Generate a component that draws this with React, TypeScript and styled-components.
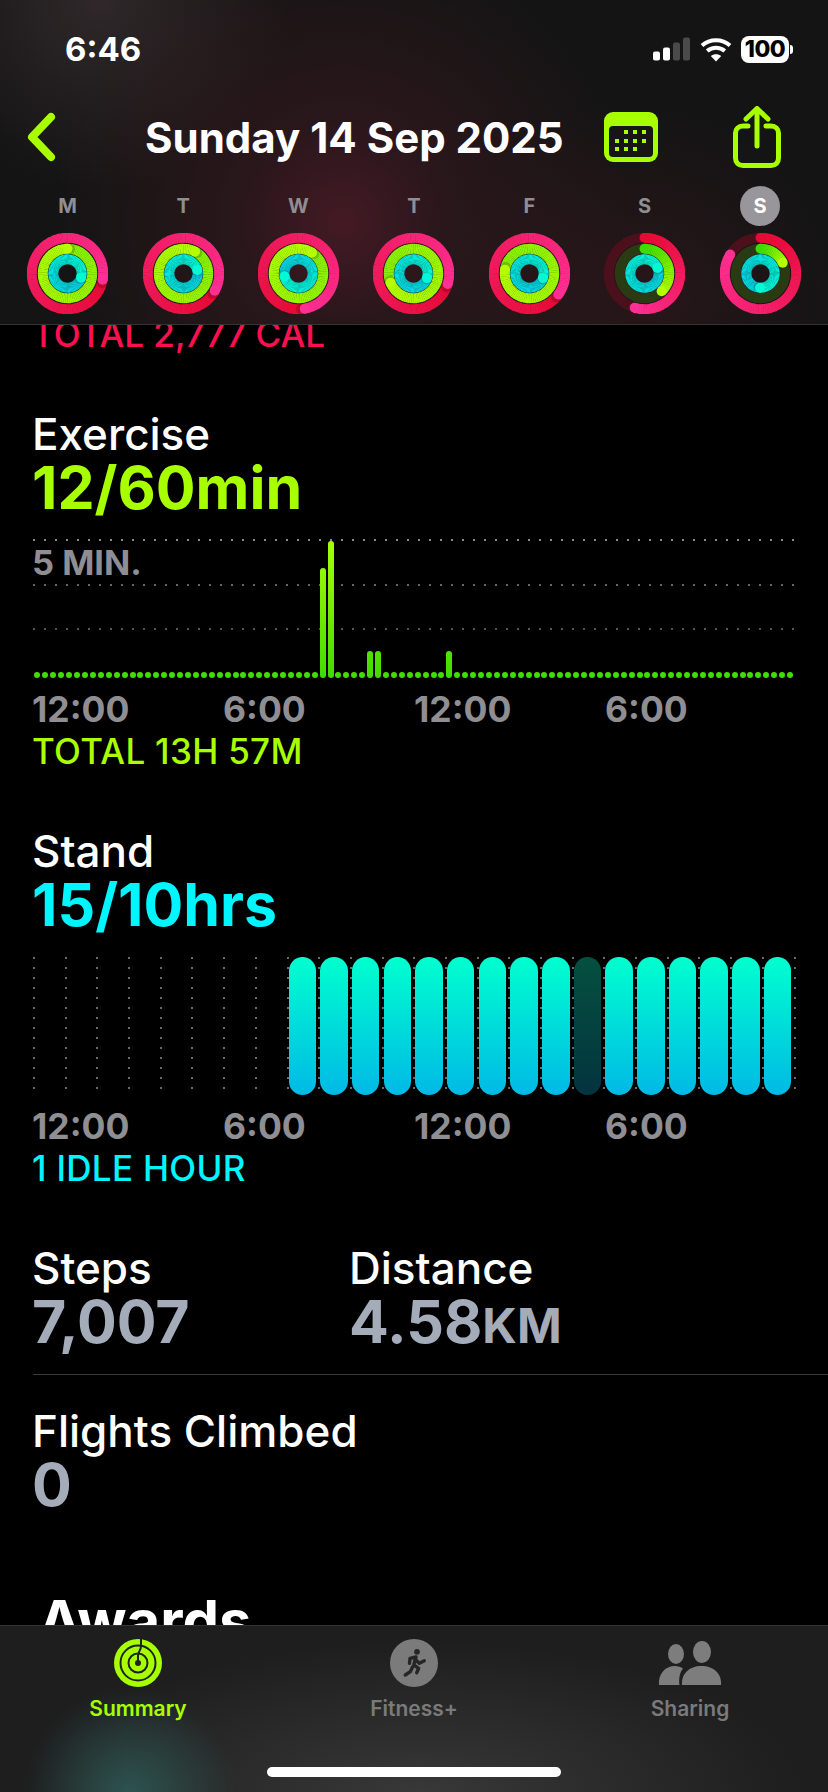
import styled, { createGlobalStyle } from 'styled-components';

const LIME = '#a8ff00';
const CYAN = '#00f6ff';
const GREY = '#8e8e93';

const GlobalStyle = createGlobalStyle`
  html, body {
    margin: 0;
    padding: 0;
    background: #000;
  }

  body {
    font-family: Inter, 'Liberation Sans', sans-serif;
    color: #fff;
  }
`;

const WEEK = [
  { day: 'M', outer: 460, middle: 360, inner: 467 },
  { day: 'T', outer: 479, middle: 388, inner: 436 },
  { day: 'W', outer: 530, middle: 393, inner: 619 },
  { day: 'T', outer: 467, middle: 608, inner: 469 },
  { day: 'F', outer: 486, middle: 639, inner: 469 },
  { day: 'S', outer: 196, middle: 136, inner: 427 },
  { day: 'S', outer: 302, middle: 64, inner: 542, today: true },
];

const RINGS = {
  outer: { r: 35.7, from: '#e80a34', fullFrom: '#e80a34', to: '#ff2f94', track: '#4c0f1c' },
  middle: { r: 24.7, from: '#3edc00', fullFrom: '#84f000', to: '#b4ff00', track: '#2a3a12' },
  inner: { r: 14.2, from: '#00d0e4', fullFrom: '#00d0e4', to: '#00fad6', track: '#083f42' },
};

const HOURS = ['12:00', '6:00', '12:00', '6:00'];
const EXERCISE_BARS: Record<number, number> = { 36: 110, 37: 137, 42: 27, 43: 27, 52: 27 };
const EXERCISE_SLOTS = Array.from({ length: 96 }, (_, i) => EXERCISE_BARS[i] ?? 6);
const STAND_HOURS = Array.from({ length: 24 }, (_, i) => (i < 8 ? 'none' : i === 17 ? 'idle' : 'stood'));

const mix = (from: string, to: string, t: number) => {
  const channel = (hex: string, i: number) => parseInt(hex.slice(1 + i * 2, 3 + i * 2), 16);
  const parts = [0, 1, 2].map((i) => Math.round(channel(from, i) + (channel(to, i) - channel(from, i)) * t));
  return `rgb(${parts.join(',')})`;
};

const polar = (r: number, deg: number) => {
  const rad = ((deg - 90) * Math.PI) / 180;
  return { x: 40.5 + r * Math.cos(rad), y: 40.5 + r * Math.sin(rad) };
};

const arc = (r: number, a: number, b: number) => {
  const start = polar(r, a);
  const end = polar(r, b);
  return `M${start.x} ${start.y}A${r} ${r} 0 0 1 ${end.x} ${end.y}`;
};

// angle is how far the ring has travelled, more than 360 means the goal was passed
const RingArc = ({ kind, angle }: { kind: keyof typeof RINGS; angle: number }) => {
  const { r, from, fullFrom, to, track } = RINGS[kind];
  const full = angle >= 360;
  const start = full ? angle - 360 : 0;
  const sweep = angle - start;
  const steps = Math.ceil(sweep / 4);
  const head = polar(r, angle);
  const shadow = polar(r, angle + 6);
  const tail = polar(r, start);

  return (
    <g fill='none' strokeWidth='10'>
      {!full && <circle cx='40.5' cy='40.5' r={r} stroke={track} />}
      {!full && <circle cx={tail.x} cy={tail.y} r='5' fill={from} stroke='none' />}
      {Array.from({ length: steps }, (_, i) => (
        <path
          key={i}
          d={arc(r, start + (sweep * i) / steps, start + (sweep * (i + 1)) / steps + 0.6)}
          stroke={mix(full ? fullFrom : from, to, i / steps)}
        />
      ))}
      {full && <circle cx={shadow.x} cy={shadow.y} r='5' fill='rgba(0,0,0,.18)' stroke='none' />}
      <circle cx={head.x} cy={head.y} r='5' fill={to} stroke='none' />
    </g>
  );
};

const ActivityRings = ({ outer, middle, inner }: { outer: number; middle: number; inner: number }) => (
  <svg width='81' height='81' viewBox='0 0 81 81'>
    <RingArc kind='outer' angle={outer} />
    <RingArc kind='middle' angle={middle} />
    <RingArc kind='inner' angle={inner} />
  </svg>
);

const SignalIcon = () => (
  <svg width='38' height='24' viewBox='0 0 38 24'>
    <rect x='0' y='14.5' width='7' height='9' rx='2' fill='#fff' />
    <rect x='10' y='10.5' width='7' height='13' rx='2' fill='#fff' />
    <rect x='20' y='5.5' width='7' height='18' rx='2' fill='#4a4a4a' />
    <rect x='30' y='0.5' width='7' height='23' rx='2' fill='#4a4a4a' />
  </svg>
);

const WifiIcon = () => (
  <svg width='32' height='26' viewBox='0 0 32 26' fill='none' stroke='#fff' strokeWidth='4'>
    <path d='M2 9.5C9.8 2.6 22.2 2.6 30 9.5' />
    <path d='M7.2 15C12.4 10.6 19.6 10.6 24.8 15' />
    <path d='M16 25.5L10.8 20C13.8 17.6 18.2 17.6 21.2 20Z' fill='#fff' stroke='none' />
  </svg>
);

const BackIcon = () => (
  <svg width='29' height='50' viewBox='0 0 29 50' fill='none' stroke={LIME} strokeWidth='8' strokeLinecap='round' strokeLinejoin='round'>
    <path d='M24 5L5 25L24 45' />
  </svg>
);

const CALENDAR_DOTS = [
  [22, 20], [31, 20], [40, 20],
  [13, 29], [22, 29], [31, 29], [40, 29],
  [13, 37], [22, 37], [31, 37],
];

const CalendarIcon = () => (
  <svg width='54' height='50' viewBox='0 0 54 50'>
    <rect width='54' height='50' rx='9' fill={LIME} />
    <rect x='5' y='14' width='44' height='31' rx='4' fill='#171516' />
    {CALENDAR_DOTS.map(([x, y]) => (
      <rect key={`${x}_${y}`} x={x - 2} y={y - 2} width='4' height='4' fill={LIME} />
    ))}
  </svg>
);

const ShareIcon = () => (
  <svg width='48' height='62' viewBox='0 0 48 62' fill='none' stroke={LIME} strokeWidth='5' strokeLinecap='round' strokeLinejoin='round'>
    <path d='M15 20H10C5.6 20 2.5 23 2.5 27V52C2.5 56.500 5.600 59.500 10 59.500H38C42.400 59.500 45.500 56.500 45.500 52V27C45.500 23 42.400 20 38 20H33' />
    <path d='M24 40V3' />
    <path d='M13 13L24 2.500L35 13' />
  </svg>
);

const SummaryIcon = () => (
  <svg width='48' height='48' viewBox='0 0 48 48' fill='none' stroke='#1c2321' strokeWidth='2'>
    <circle cx='24' cy='24' r='24' fill={LIME} stroke='none' />
    <circle cx='24' cy='24' r='17.500' />
    <circle cx='24' cy='24' r='9.500' />
    <circle cx='24' cy='24' r='3' fill='#1c2321' stroke='none' />
    <path d='M27 0V7C27 12 24 12 24 17V24' stroke='#1c2321' />
  </svg>
);

const FitnessIcon = () => (
  <svg width='48' height='48' viewBox='0 0 48 48' fill='none' stroke='#262626' strokeWidth='3.400' strokeLinecap='round' strokeLinejoin='round'>
    <circle cx='24' cy='24' r='24' fill='#7b7b7b' stroke='none' />
    <circle cx='27' cy='12.800' r='2.900' fill='#262626' stroke='none' />
    <path d='M19.500 24.300L20 19.300L26 18L23.800 26L28.700 29.300L26.700 33.700' />
    <path d='M25.300 20.500L29.300 24.300L34.300 21.700' />
    <path d='M22.700 27.700L20.300 32.700L15.300 36' />
  </svg>
);

const SharingIcon = () => (
  <svg width='64' height='44' viewBox='0 0 64 44' fill='#7d7d7d'>
    <ellipse cx='18' cy='13' rx='8' ry='10' />
    <ellipse cx='44' cy='11' rx='9' ry='11' />
    <path d='M1 44C0 33 7 25 17 25C20 25 23 26 25 27.500C22 31 20.500 37 21.500 44Z' />
    <path d='M24 44C23 33 31 25 43.500 25C56 25 64 33 63 44Z' />
  </svg>
);

const App = () => {
  return (
    <Page>
      <GlobalStyle />

      <Header>
        <StatusBar>
          <Clock>6:46</Clock>
          <StatusIcons>
            <SignalIcon />
            <WifiIcon />
            <Battery>
              <BatteryBody>100</BatteryBody>
              <BatteryNub />
            </Battery>
          </StatusIcons>
        </StatusBar>

        <NavRow>
          <BackIcon />
          <Title>Sunday 14 Sep 2025</Title>
          <CalendarIcon />
          <ShareIcon />
        </NavRow>

        <WeekGrid>
          {WEEK.map((item, i) => (
            <DayCell key={`day_${i}`}>
              <DayLabel $today={item.today}>{item.day}</DayLabel>
              <ActivityRings outer={item.outer} middle={item.middle} inner={item.inner} />
            </DayCell>
          ))}
        </WeekGrid>
      </Header>

      <Content>
        <MoveTotal>TOTAL 2,777 CAL</MoveTotal>

        <Heading $top={60}>Exercise</Heading>
        <BigValue $color={LIME}>12/60min</BigValue>
        <ExerciseChart>
          <GridLine $color='#8a8a8a' />
          <GridLine $color='#666666' />
          <GridLine $color='#555555' />
          <ChartNote>5 MIN.</ChartNote>
          <ExerciseSlots>
            {EXERCISE_SLOTS.map((height, i) => (
              <ExerciseSlot key={`slot_${i}`}>
                <ExerciseBar style={{ height }} />
              </ExerciseSlot>
            ))}
          </ExerciseSlots>
        </ExerciseChart>
        <TimeAxis>
          {HOURS.map((hour, i) => (
            <span key={`exercise_${i}`}>{hour}</span>
          ))}
        </TimeAxis>
        <Caption $color={LIME}>TOTAL 13H 57M</Caption>

        <Heading $top={60}>Stand</Heading>
        <BigValue $color={CYAN}>15/10hrs</BigValue>
        <StandChart>
          {STAND_HOURS.map((state, i) => (
            <StandColumn key={`stand_${i}`}>
              {state !== 'none' && <StandBar $idle={state === 'idle'} />}
            </StandColumn>
          ))}
          <StandColumn />
        </StandChart>
        <TimeAxis>
          {HOURS.map((hour, i) => (
            <span key={`stand_hour_${i}`}>{hour}</span>
          ))}
        </TimeAxis>
        <Caption $color={CYAN}>1 IDLE HOUR</Caption>

        <MetricRow>
          <Metric>
            <Heading>Steps</Heading>
            <BigValue $color='#a4abb9'>7,007</BigValue>
          </Metric>
          <Metric>
            <Heading>Distance</Heading>
            <BigValue $color='#a4abb9'>
              4.58<Unit>KM</Unit>
            </BigValue>
          </Metric>
        </MetricRow>
        <Divider />
        <Heading $top={34}>Flights Climbed</Heading>
        <BigValue $color='#a4abb9'>0</BigValue>

        <AwardsTitle>Awards</AwardsTitle>
      </Content>

      <TabBar>
        <TabGrid>
          <Tab $active>
            <TabIcon>
              <SummaryIcon />
            </TabIcon>
            Summary
          </Tab>
          <Tab>
            <TabIcon>
              <FitnessIcon />
            </TabIcon>
            Fitness+
          </Tab>
          <Tab>
            <TabIcon>
              <SharingIcon />
            </TabIcon>
            Sharing
          </Tab>
        </TabGrid>
        <HomeIndicator />
      </TabBar>
    </Page>
  );
};

export default App;

const Page = styled.div`
  display: flex;
  flex-direction: column;
  width: 828px;
  height: 1792px;
  overflow: hidden;
  background: #000;
`;

const Header = styled.header`
  flex: none;
  box-sizing: border-box;
  height: 325px;
  border-bottom: 1px solid #333333;
  background:
    radial-gradient(circle at 342px 222px, #441a24 0, rgba(68, 26, 36, 0.45) 100px, rgba(68, 26, 36, 0) 290px),
    radial-gradient(circle at 100px 0, #30282a 0, rgba(48, 40, 42, 0) 190px),
    radial-gradient(circle at 640px 300px, rgba(60, 24, 32, 0.5) 0, rgba(60, 24, 32, 0) 200px),
    #141414;
`;

const StatusBar = styled.div`
  display: flex;
  align-items: center;
  justify-content: space-between;
  box-sizing: border-box;
  height: 98px;
  padding: 0 35px 0 65px;
`;

const Clock = styled.span`
  font-size: 33px;
  font-weight: 700;
`;

const StatusIcons = styled.div`
  display: flex;
  align-items: center;
  gap: 9px;
`;

const Battery = styled.div`
  display: flex;
  align-items: center;
  gap: 1px;
`;

const BatteryBody = styled.div`
  width: 48px;
  height: 27px;
  border-radius: 8px;
  background: #fff;
  color: #000;
  font-size: 23px;
  font-weight: 800;
  letter-spacing: -0.5px;
  line-height: 27px;
  text-align: center;
`;

const BatteryNub = styled.div`
  width: 3px;
  height: 9px;
  border-radius: 0 3px 3px 0;
  background: #fff;
`;

const NavRow = styled.nav`
  display: grid;
  grid-template-columns: 118px 459px 129px 48px;
  align-items: center;
  height: 78px;
  padding-left: 27px;
`;

const Title = styled.h1`
  margin: 0;
  font-size: 42px;
  font-weight: 700;
  white-space: nowrap;
`;

const WeekGrid = styled.div`
  display: grid;
  grid-template-columns: repeat(7, 115.4px);
  margin-top: 10px;
  padding-left: 10px;
`;

const DayCell = styled.div`
  display: flex;
  flex-direction: column;
  align-items: center;
  gap: 7px;
`;

const DayLabel = styled.span<{ $today?: boolean }>`
  width: 40px;
  height: 40px;
  border-radius: 50%;
  background: ${({ $today }) => ($today ? '#98959b' : 'transparent')};
  color: ${({ $today }) => ($today ? '#fff' : GREY)};
  font-size: 20px;
  font-weight: 700;
  line-height: 40px;
  text-align: center;
`;

const Content = styled.main`
  flex: 1;
  min-height: 0;
  overflow: hidden;
  padding-left: 32px;
`;

const MoveTotal = styled.p`
  margin: -9px 0 0;
  color: #ff0f4f;
  font-size: 35px;
  font-weight: 500;
  line-height: 36px;
`;

const Heading = styled.h2<{ $top?: number }>`
  margin: ${({ $top }) => $top ?? 0}px 0 0;
  font-size: 44px;
  font-weight: 500;
  line-height: 44px;
`;

const BigValue = styled.div<{ $color: string }>`
  margin-top: 2px;
  color: ${({ $color }) => $color};
  font-size: 59px;
  font-weight: 700;
  line-height: 60px;
  white-space: nowrap;
`;

const Unit = styled.span`
  font-size: 48px;
  font-weight: 700;
  line-height: 1;
`;

const ExerciseChart = styled.div`
  position: relative;
  display: flex;
  flex-direction: column;
  gap: 42.5px;
  width: 762px;
  height: 139px;
  margin: 21px 0 0 1px;
`;

const GridLine = styled.div<{ $color: string }>`
  height: 2px;
  background-image: radial-gradient(circle at 1px 1px, ${({ $color }) => $color} 1px, transparent 1.2px);
  background-size: 11px 2px;
`;

const ChartNote = styled.span`
  position: absolute;
  top: 6px;
  left: -1px;
  color: ${GREY};
  font-size: 34.5px;
  font-weight: 700;
  line-height: 36px;
`;

const ExerciseSlots = styled.div`
  position: absolute;
  right: 0;
  bottom: 0;
  left: 0.500px;
  display: flex;
  align-items: flex-end;
`;

const ExerciseSlot = styled.div`
  display: flex;
  flex: none;
  justify-content: center;
  width: 7.930px;
`;

const ExerciseBar = styled.div`
  width: 6px;
  border-radius: 3px;
  background: linear-gradient(#a8ff00, #3edc00) bottom / 100% 137px no-repeat;
`;

const TimeAxis = styled.div`
  display: grid;
  grid-template-columns: repeat(4, 191px);
  margin-top: 14px;
  color: ${GREY};
  font-size: 35.5px;
  font-weight: 700;
  line-height: 36px;
`;

const Caption = styled.p<{ $color: string }>`
  margin: 5px 0 0;
  color: ${({ $color }) => $color};
  font-size: 35px;
  font-weight: 500;
  letter-spacing: 0.3px;
  line-height: 36px;
`;

const StandChart = styled.div`
  display: grid;
  grid-template-columns: repeat(24, 31.700px) 2px;
  width: 763px;
  height: 138px;
  margin: 22px 0 0 1px;
`;

const StandColumn = styled.div`
  box-sizing: border-box;
  padding-left: 2px;
  background-image: radial-gradient(circle at 1px 1px, #6a6a6a 1px, transparent 1.2px);
  background-repeat: repeat-y;
  background-size: 2px 10px;
`;

const StandBar = styled.div<{ $idle: boolean }>`
  width: 27.500px;
  height: 138px;
  border-radius: 14px;
  background: ${({ $idle }) =>
    $idle ? 'linear-gradient(#05503f, #03343f)' : 'linear-gradient(#00ffcf, #00b9e6)'};
`;

const MetricRow = styled.div`
  display: grid;
  grid-template-columns: 317px auto;
  margin-top: 60px;
`;

const Metric = styled.div`
  display: flex;
  flex-direction: column;
`;

const Divider = styled.hr`
  height: 1px;
  margin: 22px 0 0 1px;
  border: 0;
  background: #3a3a3a;
`;

const AwardsTitle = styled.h2`
  margin: 76px 0 0 6px;
  font-size: 58px;
  font-weight: 700;
  line-height: 60px;
`;

const TabBar = styled.footer`
  flex: none;
  box-sizing: border-box;
  height: 167px;
  border-top: 1px solid #333333;
  background:
    radial-gradient(circle at 130px 167px, rgba(46, 92, 88, 0.85) 0, rgba(46, 92, 88, 0) 105px),
    radial-gradient(ellipse at 420px 167px, #383838 0, rgba(56, 56, 56, 0) 380px),
    #1e1e1e;
`;

const TabGrid = styled.div`
  display: grid;
  grid-template-columns: repeat(3, 276px);
  padding-top: 13px;
`;

const Tab = styled.div<{ $active?: boolean }>`
  display: flex;
  flex-direction: column;
  align-items: center;
  color: ${({ $active }) => ($active ? LIME : '#7a7a7a')};
  font-size: 21px;
  font-weight: 600;
  line-height: 26px;
`;

const TabIcon = styled.div`
  display: flex;
  align-items: center;
  height: 48px;
  margin-bottom: 9px;
`;

const HomeIndicator = styled.div`
  width: 294px;
  height: 10px;
  margin: 45px auto 0;
  border-radius: 5px;
  background: #fff;
`;
